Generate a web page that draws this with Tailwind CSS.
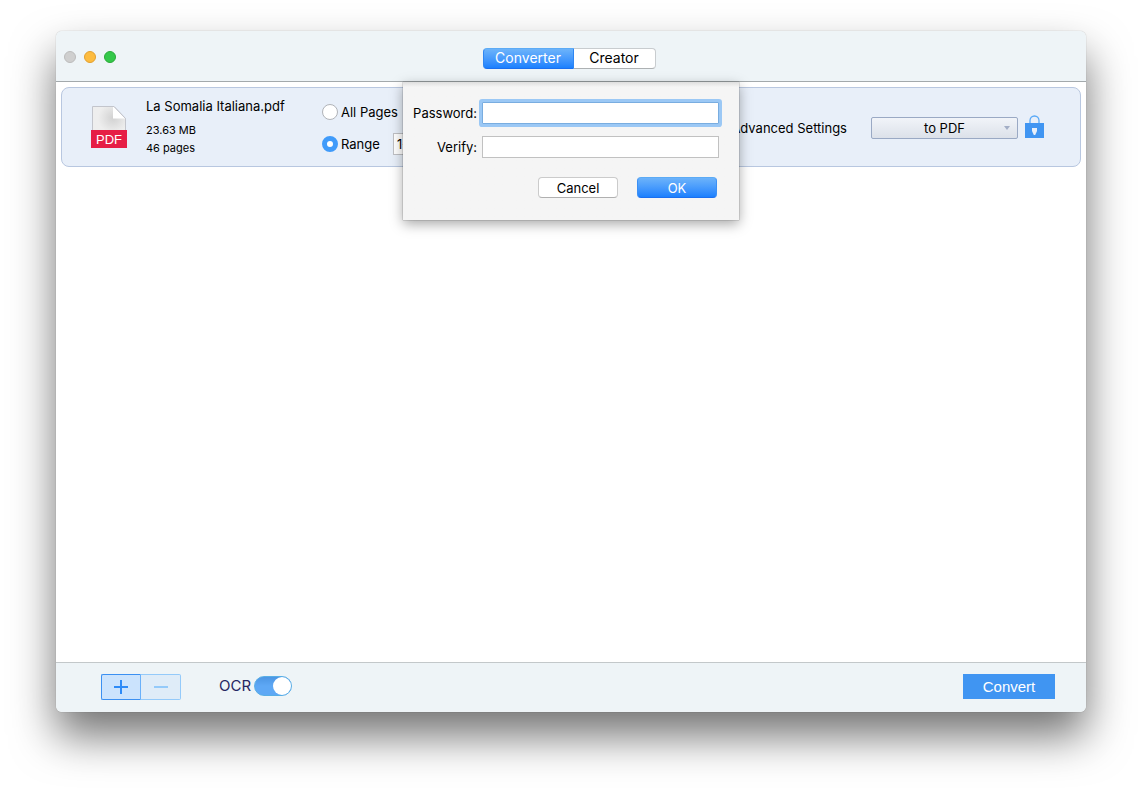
<!doctype html>
<html lang="en">
  <head>
    <meta charset="UTF-8" />
    <meta name="viewport" content="width=device-width, initial-scale=1.0" />
    <title>Converter</title>
    <script src="https://cdn.jsdelivr.net/npm/@tailwindcss/browser@4"></script>
  </head>
  <body class="h-screen bg-white px-14 pt-[31px] pb-20 font-[Inter,sans-serif] text-[13px] leading-4 text-black">
    <div class="relative flex h-full flex-col rounded-md bg-white shadow-[0_0_1px_rgba(0,0,0,0.4),0_24px_44px_rgba(0,0,0,0.55)]">
      <header class="grid h-[51px] shrink-0 grid-cols-3 items-center rounded-t-md border-b border-[#a3a9ac] bg-[#eef4f7] pr-1">
        <div class="flex gap-2 pt-0.5 pl-2">
          <button aria-label="Close" class="size-3 rounded-full border border-[#bcbcbc] bg-[#cfcfcf]"></button>
          <button aria-label="Minimize" class="size-3 rounded-full border border-[#e2a02f] bg-[#fdbc40]"></button>
          <button aria-label="Zoom" class="size-3 rounded-full border border-[#2aa938] bg-[#34c84a]"></button>
        </div>
        <nav class="flex justify-center pt-1 text-sm">
          <button class="h-[21px] w-[91px] rounded-l border border-[#2f86f2] border-t-[#5cabf5] border-b-[#1b6ff0] bg-linear-to-b from-[#6cb3fa] to-[#1a80fe] leading-4 text-white">Converter</button>
          <button class="h-[21px] w-[82px] rounded-r border border-l-0 border-[#c8cccf] border-b-[#adb1b3] bg-white leading-4">Creator</button>
        </nav>
      </header>

      <main class="flex-1 p-[5px]">
        <div class="flex h-20 items-center rounded-lg border border-[#b8c7e0] bg-[#e8eff9] pr-9 pl-[29px]">
          <svg class="h-[42px] w-9 shrink-0" viewBox="0 0 36 42" aria-label="PDF">
            <defs>
              <radialGradient id="fold" cx="22" cy="12" r="15" gradientUnits="userSpaceOnUse">
                <stop offset="0" stop-color="#d2d2d2" />
                <stop offset="1" stop-color="#eeeeee" />
              </radialGradient>
            </defs>
            <path d="M1.5 26V.5H23L34.500 12.500V26z" fill="url(#fold)" stroke="#c3c5cc" />
            <path d="M22 1h1L34 12.500H22z" fill="#fff" />
            <path d="M23 .5L34.500 12.500" stroke="#c3c5cc" />
            <path d="M0 24h36v18H0z" fill="#e61e46" />
            <text x="18" y="38" text-anchor="middle" font-family="Liberation Sans, sans-serif" font-size="13" fill="#fff">PDF</text>
          </svg>
          <div class="ml-[19px] w-44 text-[11px]">
            <p class="mb-2 text-[13px]">La Somalia Italiana.pdf</p>
            <p class="mb-0.5">23.63 MB</p>
            <p>46 pages</p>
          </div>
          <div class="flex flex-1 items-center pt-0.5">
            <div class="flex flex-col gap-2.5">
              <label class="flex h-[22px] items-center gap-[3px]">
                <input type="radio" name="pages" class="size-4 appearance-none rounded-full border border-[#b0b3b8] bg-white" />
                All Pages
              </label>
              <div class="flex h-[22px] items-center">
                <label class="flex w-[71px] items-center gap-[3px]">
                  <input type="radio" name="pages" checked class="size-4 appearance-none rounded-full border-5 border-[#409bfa] bg-white" />
                  Range
                </label>
                <input type="text" value="1-46" aria-label="Page range" class="h-[22px] w-24 border border-[#bfc0c4] bg-white px-[3px]" />
              </div>
            </div>
            <button class="mr-6 ml-auto">Advanced Settings</button>
            <div class="relative">
              <select aria-label="Output format" class="block h-[22px] w-[147px] appearance-none rounded-xs border border-[#9aa9c4] bg-linear-to-b from-[#f1f4f9] to-[#dce1e9] [text-align-last:center]">
                <option>to PDF</option>
              </select>
              <span class="pointer-events-none absolute top-[9px] right-2 border-x-3 border-t-4 border-x-transparent border-t-[#a3aec6]"></span>
            </div>
          </div>
          <button aria-label="Set password" class="ml-[7px] pb-0.5">
            <svg class="block h-[23px] w-[19px]" viewBox="0 0 19 23">
              <path d="M5 9V5.500a4.500 4.500 0 0 1 9 0V9" fill="none" stroke="#59a9f7" stroke-width="1.300" />
              <path d="M0 8h19v15H0z" fill="#4095f2" />
              <path d="M7 13h5v3l-1.800 4H8.800L7 16z" fill="#e8eff9" />
            </svg>
          </button>
        </div>
      </main>

      <footer class="flex h-[50px] shrink-0 items-center rounded-b-md border-t border-[#c3c8ca] bg-[#eef4f7] pr-[31px] pb-0.5 pl-[45px]">
        <div class="flex">
          <button aria-label="Add" class="flex h-[26px] w-10 items-center justify-center rounded-l-xs border border-[#3b90f2] border-r-[#69b0fa] bg-[#cbe3fd]">
            <svg class="size-3.5" viewBox="0 0 14 14" stroke="#2e8bf7" stroke-width="2"><path d="M0 7h14M7 0v14" /></svg>
          </button>
          <button aria-label="Remove" class="flex h-[26px] w-10 items-center justify-center rounded-r-xs border border-l-0 border-[#94cafa] bg-[#dfecf8]">
            <svg class="size-3.5" viewBox="0 0 14 14" stroke="#94cafa" stroke-width="2"><path d="M0 7h14" /></svg>
          </button>
        </div>
        <label class="ml-[38px] flex items-center gap-[3px] pb-0.5 text-[15px] text-[#262663]">
          OCR
          <input type="checkbox" role="switch" checked class="peer sr-only" />
          <span class="flex h-5 w-[38px] justify-end rounded-full border border-[#58aee6] bg-linear-to-b from-[#4c96e4] to-[#5ea8f5] to-50%">
            <span class="size-[18px] rounded-full bg-white"></span>
          </span>
        </label>
        <button class="ml-auto h-[25px] w-[92px] bg-[#4095f2] font-['Liberation_Sans',sans-serif] text-[15px] text-white">Convert</button>
      </footer>

      <form class="absolute top-[51px] left-1/2 w-[336px] -translate-x-1/2 bg-[#f5f5f5] bg-linear-to-b from-[#dedede] to-[#f5f5f5] to-[5px] pt-5 pr-5 pb-[22px] shadow-[0_0_1px_rgba(0,0,0,0.6),0_4px_12px_rgba(0,0,0,0.35)]">
        <div class="grid grid-cols-[74px_1fr] items-center gap-x-[5px] gap-y-3">
          <label for="password" class="text-right">Password:</label>
          <input id="password" type="password" class="h-[22px] min-w-0 rounded-[1px] border border-[#79ade0] bg-white px-1 ring-3 ring-[#9bc8f5] outline-none" />
          <label for="verify" class="text-right">Verify:</label>
          <input id="verify" type="password" class="h-[22px] min-w-0 border border-[#c1c1c1] bg-white px-1" />
        </div>
        <div class="mt-[19px] mr-0.5 flex justify-end gap-[19px]">
          <button type="button" class="h-[21px] w-20 rounded border border-[#cbcbcb] border-b-[#b0b0b0] bg-white">Cancel</button>
          <button type="submit" class="h-[21px] w-20 rounded border border-[#3c90f5] border-t-[#5cabf5] border-b-[#1b6ff0] bg-linear-to-b from-[#6cb3fa] to-[#1a80fe] text-white">OK</button>
        </div>
      </form>
    </div>
  </body>
</html>
